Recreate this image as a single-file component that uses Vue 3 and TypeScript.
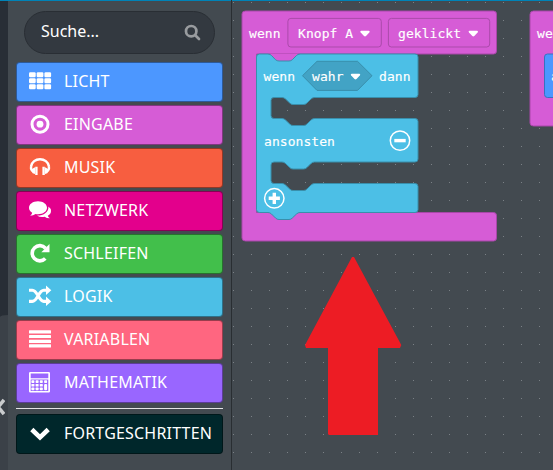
<script setup lang="ts">
interface Category {
  name: string
  color: string
  icon: string
}

const categories: Category[] = [
  { name: 'Licht', color: '#4c97ff', icon: 'grid' },
  { name: 'Eingabe', color: '#d65cd6', icon: 'target' },
  { name: 'Musik', color: '#f75e40', icon: 'headphones' },
  { name: 'Netzwerk', color: '#e3008c', icon: 'comments' },
  { name: 'Schleifen', color: '#42bf4b', icon: 'repeat' },
  { name: 'Logik', color: '#4cbfe6', icon: 'random' },
  { name: 'Variablen', color: '#ff6680', icon: 'lines' },
  { name: 'Mathematik', color: '#9966ff', icon: 'calculator' },
]
const cells = [0, 1, 2]
</script>

<template>
  <main class="editor">
    <aside class="rail">
      <div class="rail-top"></div>
      <div class="rail-bottom">
        <svg class="collapse" width="5" height="18" viewBox="0 0 5 18"><path d="M4 2 L-2 9 L4 16" /></svg>
      </div>
    </aside>

    <nav class="toolbox">
      <div class="search">
        <span>Suche...</span>
        <svg width="17" height="17" viewBox="0 0 17 17">
          <circle cx="7.2" cy="7.2" r="5.2" /><path d="M11 11 L15 15" />
        </svg>
      </div>
      <ul class="categories">
        <li v-for="c in categories" :key="c.name" class="category" :style="{ backgroundColor: c.color }">
          <svg class="icon" width="24" height="24" viewBox="0 0 24 24">
            <g v-if="c.icon === 'grid'">
              <template v-for="r in cells" :key="r">
                <rect v-for="k in cells" :key="k" :x="1 + k * 7.7" :y="3.3 + r * 6" width="6.7" height="5" rx="1.2" />
              </template>
            </g>
            <g v-else-if="c.icon === 'target'">
              <circle class="stroke" cx="12" cy="12.2" r="8" stroke-width="3" />
              <circle cx="12" cy="12.2" r="3.4" />
            </g>
            <g v-else-if="c.icon === 'headphones'">
              <path class="stroke" d="M4.2 16 C2.8 14.5 2.8 12.6 3.1 11.2 A9 8.3 0 0 1 20.9 11.2 C21.2 12.6 21.2 14.5 19.8 16" stroke-width="2.5" />
              <path d="M2.5 14.8 L7 12.2 V19 L4.7 18.2 Z M7.2 11.7 H9.6 V20 H7.2 Z M21.5 14.8 L17 12.2 V19 L19.3 18.2 Z M14.4 11.7 H16.8 V20 H14.4 Z" />
            </g>
            <g v-else-if="c.icon === 'comments'">
              <path d="M10 3.2 C15.1 3.2 19 6.1 19 9.7 S15.1 16.2 10 16.2 Q8.8 16.2 7.6 16 Q5.2 17.8 2.2 17.8 Q4 16.3 4.2 14.7 Q1 12.8 1 9.7 C1 6.1 4.9 3.2 10 3.2 Z" />
              <path d="M20.4 8.4 Q23 10.2 23 13 Q23 16 19.8 17.8 Q20.1 19 21.8 20.3 Q18.6 20.3 16.6 18.8 Q12.1 19.7 9 17.5 C15.7 17.6 20.9 14 20.4 8.4 Z" />
            </g>
            <g v-else-if="c.icon === 'repeat'">
              <path class="stroke" d="M17.3 17.5 A7.6 7.6 0 1 1 17.5 7.2" stroke-width="3.6" />
              <path d="M21.5 3 V11.2 H13.3 Z" />
            </g>
            <g v-else-if="c.icon === 'random'">
              <path class="stroke" d="M1 6.2 H4.3 C9.7 6.2 10.5 17.4 15.8 17.4 H19 M1 17.4 H4.3 C9.7 17.4 10.5 6.2 15.8 6.2 H19" stroke-width="3.1" />
              <path d="M18 1.5 L23.3 6.2 L18 11 Z M18 12.6 L23.3 17.4 L18 22.1 Z" />
            </g>
            <g v-else-if="c.icon === 'lines'">
              <rect v-for="y in [3.3, 8, 12.8, 17.3]" :key="y" x="1" :y="y" width="22" height="3.1" rx=".5" />
            </g>
            <g v-else>
              <path fill-rule="evenodd" d="M2.3 1.9 H20.7 Q22 1.9 22 3.2 V21.2 Q22 22.5 20.7 22.5 H2.3 Q1 22.5 1 21.2 V3.2 Q1 1.9 2.3 1.9 Z M2.7 3.4 V8.2 H20.3 V3.4 Z M2.7 9.5 V21 H20.3 V9.5 Z" />
              <template v-for="r in cells" :key="r">
                <rect v-for="k in cells" :key="k" :x="3.4 + k * 4.2" :y="10.2 + r * 3.7" width="3" height="2.7" rx=".7" />
              </template>
              <rect x="16.1" y="10.2" width="3" height="2.7" rx=".7" /><rect x="16.1" y="13.9" width="3" height="6.4" rx="1" />
            </g>
          </svg>
          <span>{{ c.name }}</span>
        </li>
      </ul>
      <div class="divider"></div>
      <div class="category advanced">
        <svg class="icon" width="24" height="24" viewBox="0 0 24 24"><path class="stroke" d="M3.8 8.5 L12 16.3 L20.2 8.5" stroke-width="4.6" /></svg>
        <span>Fortgeschritten</span>
      </div>
    </nav>

    <section class="workspace">
      <svg class="blocks" width="321" height="470" viewBox="232 0 321 470">
        <defs>
          <pattern id="dots" x="251" y="2" width="18" height="18" patternUnits="userSpaceOnUse">
            <path d="M0 0 H1 V1 H0 Z" fill="#7b8186" />
          </pattern>
          <path id="caret" d="M-3.8 -2.7 H3.8 Q5.4 -2.4 4.3 -.9 L1 2.5 Q0 3.3 -1 2.5 L-4.3 -.9 Q-5.4 -2.4 -3.8 -2.7 Z" fill="#fff" />
        </defs>
        <rect x="232" y="0" width="321" height="470" fill="url(#dots)" />

        <path class="event" d="M245.5 11 H493.5 Q496.5 11 496.5 14 V51 Q496.5 54 493.5 54 H256.5 V212.5 H493.5 Q496.5 212.5 496.5 215.5 V238 Q496.5 241 493.5 241 H245.5 Q242 241 242 238 V14 Q242 11 245.5 11 Z" />
        <path class="event notch" d="M270 54 H298 V62 H270 Z" />
        <path class="logic" d="M259.5 54 H268 Q270 54 271.5 55.5 L275.5 59.7 Q277 61 279 61 H289 Q291 61 292.3 59.7 L296.5 55.5 Q298 54 300 54 H415 Q418 54 418 57 V94.5 Q418 97.5 415 97.5 H314.5 Q312.5 97.5 311 99 L307 103 Q305.5 104.5 303.5 104.5 H293 Q291 104.5 289.7 103 L285.5 99 Q284 97.5 282 97.5 H274 Q271 97.5 271 100.5 V115.5 Q271 118.5 274 118.5 H282 Q284 118.5 285.5 120 L289.7 124 Q291 125.5 293 125.5 H303.5 Q305.5 125.5 307 124 L311 120 Q312.5 118.5 314.5 118.5 H415 Q418 118.5 418 121.5 V159 Q418 162 415 162 H314.5 Q312.5 162 311 163.5 L307 167.5 Q305.5 169 303.5 169 H293 Q291 169 289.7 167.5 L285.5 163.5 Q284 162 282 162 H274 Q271 162 271 165 V180.5 Q271 183.5 274 183.5 H282 Q284 183.5 285.5 185 L289.7 189 Q291 190.5 293 190.5 H303.5 Q305.5 190.5 307 189 L311 185 Q312.5 183.5 314.5 183.5 H415 Q418 183.5 418 186.5 V209.5 Q418 212.5 415 212.5 H300 Q298 212.5 296.5 214 L292.3 218 Q291 219.5 289 219.5 H279 Q277 219.5 275.5 218 L271.5 214 Q270 212.5 268 212.5 H259.5 Q256.5 212.5 256.5 209.5 V57 Q256.5 54 259.5 54 Z" />

        <rect class="field" x="287.9" y="18.4" width="93.4" height="28.6" rx="3" />
        <rect class="field" x="388.4" y="18.4" width="101.3" height="28.6" rx="3" />
        <path class="hex" d="M302.5 75.7 L317 61.3 H357.5 L372 75.7 L357.5 90.4 H317 Z" />
        <text x="249" y="38">wenn</text>
        <text x="298" y="38">Knopf A</text>
        <text x="398" y="38">geklickt</text>
        <text x="263.5" y="81">wenn</text>
        <text x="312" y="81">wahr</text>
        <text x="379" y="81">dann</text>
        <text x="264" y="146">ansonsten</text>
        <use href="#caret" x="365" y="33.5" /><use href="#caret" x="473.3" y="33.5" /><use href="#caret" x="355.5" y="76.5" />
        <g class="round"><circle cx="400" cy="140.6" r="9.7" /><path d="M394.3 140.6 H405.7" /></g>
        <g class="round"><circle cx="274.3" cy="198.3" r="9.7" /><path d="M268.7 198.3 H279.9 M274.3 192.7 V203.9" /></g>

        <path class="event" d="M570 11 H533.5 Q530 11 530 14.5 V123 Q530 126 533.5 126 H570 Z" />
        <path class="light" d="M570 54 H547.5 Q544.5 54 544.5 57 V94.5 Q544.5 97.5 547.5 97.5 H570 Z" />
        <text x="537" y="38">we</text>
        <text x="551" y="81">a</text>

        <path fill="#ed1c24" d="M352 257 H354 L401.3 345 L400 348 H378 V435 H329 L328 434 V348 H306 L305 345 Z" />
      </svg>
    </section>
  </main>
</template>

<style>
body { margin: 0; overflow: hidden; }
</style>

<style scoped>
.editor {
  box-sizing: border-box;
  display: flex;
  width: 553px;
  height: 470px;
  overflow: hidden;
  background: linear-gradient(#0083b7 0 1px, #434a50 1px);
  font-family: "Noto Sans", "Open Sans", sans-serif;
}
.rail { display: flex; flex-direction: column; width: 8px; padding-top: 1px; background: #282e36; background-clip: content-box; }
.rail-top { height: 314px; }
.rail-bottom { flex: 1; background: #3b4148; border-top-left-radius: 8px 2px; }
.collapse { display: block; margin-top: 83px; }
.collapse path { fill: none; stroke: #c9cbcd; stroke-width: 3.6; }
.toolbox { box-sizing: border-box; width: 224px; padding: 11px 8px 0; border-right: 1px solid #292e32; flex: none; }
.search {
  box-sizing: border-box;
  display: flex;
  align-items: center;
  justify-content: space-between;
  height: 43px;
  margin: 0 8px 8px;
  padding: 0 13px 3px 16px;
  border: 1px solid #292e34;
  border-radius: 22px;
  background: #333940;
  color: #fff;
  font-size: 16px;
}
.search svg { fill: none; stroke: #999c9f; stroke-width: 2.7; stroke-linecap: round; margin-top: 3px; }
.categories { display: flex; flex-direction: column; gap: 3px; margin: 0; padding: 0; list-style: none; }
.category {
  box-sizing: border-box;
  display: flex;
  align-items: center;
  gap: 12px;
  height: 40px;
  padding: 0 0 2px 11px;
  border: 1px solid rgba(0, 0, 0, .4);
  border-radius: 4px;
  color: #fff;
  font-size: 16px;
  letter-spacing: .2px;
  text-transform: uppercase;
  white-space: nowrap;
}
.icon { flex: none; fill: #fff; }
.stroke { fill: none; stroke: #fff; }
.divider { height: 1px; margin: 5px 0; background: #e3e4e5; }
.advanced { background: #00272b; }
.workspace { width: 321px; flex: none; }
.blocks { display: block; }
.blocks text { fill: #fff; font: 13px "DejaVu Sans Mono", monospace; stroke: #fff; stroke-width: .15; letter-spacing: .05px; white-space: pre; }
.event { fill: #d65cd6; stroke: #a847a8; }
.event.notch { stroke: none; }
.logic { fill: #4cbfe6; stroke: #398fac; }
.light { fill: #4c97ff; stroke: #3971bf; }
.field { fill: #d65cd6; stroke: #ab4aab; }
.hex { fill: #42a3c5; stroke: #398fac; }
.round { fill: none; stroke: #fff; stroke-width: 1.5; }
.round path { stroke-width: 3.4; }
</style>
